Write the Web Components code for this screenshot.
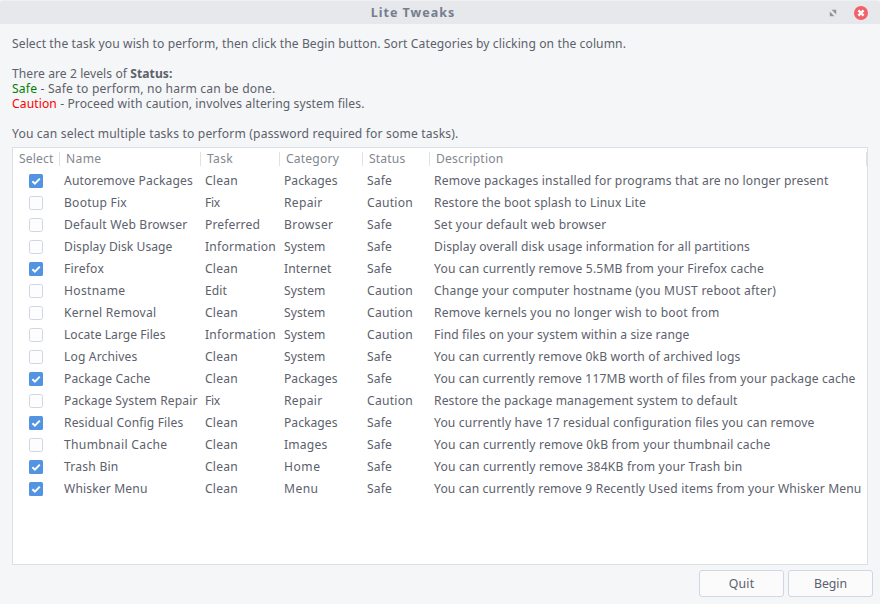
<!DOCTYPE html>
<html lang="en"><head><meta charset="utf-8"><title>Lite Tweaks</title>
<style>
html,body{margin:0;height:100%;background:#f5f6f7}
body{font:12.1px/15px "Noto Sans","Open Sans",sans-serif;color:#5c616c;overflow:hidden}
</style></head><body>
<lite-window></lite-window>
<script>
// A single line of text, tracked out to the width given in its "w" attribute.
customElements.define('fit-text', class extends HTMLElement{
  connectedCallback(){
    if(!this.shadowRoot) this.attachShadow({mode:'open'}).innerHTML='<style>:host{display:inline-block;white-space:pre}</style><slot></slot>';
    const w=+this.getAttribute('w');
    if(!w) return;
    this.style.letterSpacing='0px';
    const n=this.textContent.length;
    this.style.letterSpacing=((w-this.getBoundingClientRect().width)/n)+'px';
  }
});
customElements.define('title-bar', class extends HTMLElement{
  connectedCallback(){
    this.attachShadow({mode:'open'}).innerHTML=`<style>
:host{display:grid;grid-template-columns:1fr auto 1fr;align-items:center;height:24px;box-sizing:border-box;background:#e7e8eb;border-top:1px solid #eff0f2;border-radius:3px 3px 0 0;color:#757d8f;font-weight:bold;font-size:12.5px;padding-right:12px}
.t{grid-column:2;margin-left:-42px;padding-bottom:1px}
.c{display:flex;justify-content:flex-end;align-items:center;gap:17px}
svg{display:block}
</style><span class="t"><slot></slot></span><span class="c">
<svg width="8" height="8" viewBox="0 0 8 8" fill="#8f939b"><path d="M2.6 .8h4.6v4.6zM.8 2.6v4.6h4.6z"/></svg>
<svg width="14" height="14" viewBox="0 0 14 14"><circle cx="7" cy="7" r="7" fill="#f46067"/><path d="M4.4 4.4l5.2 5.2M9.6 4.4l-5.2 5.2" stroke="#fff" stroke-width="2.3"/></svg></span>`;
  }
});
customElements.define('check-box', class extends HTMLElement{
  connectedCallback(){
    const on=this.hasAttribute('checked');
    this.attachShadow({mode:'open'}).innerHTML=`<style>
:host{display:block;width:14px;height:14px}svg{display:block}</style>
<svg width="14" height="14" viewBox="0 0 14 14">${on
?'<rect width="14" height="14" rx="1.6" fill="#5294e2"/><path d="M3.4 7.2l2.5 2.4 4.9-5" fill="none" stroke="#fff" stroke-width="2"/>'
:'<rect x=".5" y=".5" width="13" height="13" rx="1.8" fill="#fdfdfe" stroke="#cfd6e6"/>'}</svg>`;
  }
});
customElements.define('push-button', class extends HTMLElement{
  connectedCallback(){
    this.attachShadow({mode:'open'}).innerHTML=`<style>
:host{display:flex;width:85px;height:27px;box-sizing:border-box;border:1px solid #cfd6e6;border-radius:3px;background:#fbfbfc;align-items:center;justify-content:center;font-size:12.3px}</style><slot></slot>`;
  }
});
const W={'Clean':33,'Fix':15,'Preferred':55,'Information':71,'Edit':22,'Packages':53.5,'Repair':38.5,'Browser':49.5,'System':41.5,'Internet':47.5,'Images':43.5,'Home':36.5,'Menu':34.5,'Safe':25,'Caution':46};
const rows=[
[1,'Autoremove Packages',129,'Clean','Packages','Safe','Remove packages installed for programs that are no longer present',394.5],
[0,'Bootup Fix',63,'Fix','Repair','Caution','Restore the boot splash to Linux Lite',212],
[0,'Default Web Browser',123.5,'Preferred','Browser','Safe','Set your default web browser',172.5],
[0,'Display Disk Usage',108.5,'Information','System','Safe','Display overall disk usage information for all partitions',316],
[1,'Firefox',40,'Clean','Internet','Safe','You can currently remove 5.5MB from your Firefox cache',330],
[0,'Hostname',61.5,'Edit','System','Caution','Change your computer hostname (you MUST reboot after)',342],
[0,'Kernel Removal',92.5,'Clean','System','Caution','Remove kernels you no longer wish to boot from',285.5],
[0,'Locate Large Files',101.5,'Information','System','Caution','Find files on your system within a size range',255.5],
[0,'Log Archives',73.5,'Clean','System','Safe','You can currently remove 0kB worth of archived logs',306.5],
[1,'Package Cache',86.5,'Clean','Packages','Safe','You can currently remove 117MB worth of files from your package cache',421.5],
[0,'Package System Repair',133.5,'Fix','Repair','Caution','Restore the package management system to default',303.5],
[1,'Residual Config Files',119.5,'Clean','Packages','Safe','You currently have 17 residual configuration files you can remove',380.5],
[0,'Thumbnail Cache',103.5,'Clean','Images','Safe','You can currently remove 0kB from your thumbnail cache',336.5],
[1,'Trash Bin',54.5,'Clean','Home','Safe','You can currently remove 384KB from your Trash bin',308.5],
[1,'Whisker Menu',83.5,'Clean','Menu','Safe','You can currently remove 9 Recently Used items from your Whisker Menu',427.5]];
const fit=(t,w)=>`<fit-text w="${w||0}">${t}</fit-text>`;
customElements.define('task-table', class extends HTMLElement{
  connectedCallback(){
    const heads=[['Select',34.5],['Name',35.5],['Task',26],['Category',53],['Status',36.5],['Description',67.5]];
    this.attachShadow({mode:'open'}).innerHTML=`<style>
:host{display:block;background:#fff;border:1px solid #dcdfe3;box-sizing:border-box}
.h,.r{display:grid;grid-template-columns:47px 141px 79px 83px 67px 1fr;height:22px;align-items:center}
.h{color:#83878f}
.h span{height:14px;display:flex;align-items:center;border-right:1px solid #dfe1e5;padding-left:6px}
.h fit-text{margin-top:-2px}
.r span{padding:0 0 1px 4px;white-space:nowrap;height:16px}
check-box{margin-left:16px}
</style><div class="h">${heads.map(h=>`<span>${fit(...h)}</span>`).join('')}</div>`+
rows.map(r=>`<div class="r"><check-box ${r[0]?'checked':''}></check-box><span>${fit(r[1],r[2])}</span>${[3,4,5].map(i=>`<span>${fit(r[i],W[r[i]])}</span>`).join('')}<span>${fit(r[6],r[7])}</span></div>`).join('');
  }
});
customElements.define('lite-window', class extends HTMLElement{
  connectedCallback(){
    this.attachShadow({mode:'open'}).innerHTML=`<style>
:host{display:flex;flex-direction:column;width:880px;height:604px;background:#f5f6f7}
.intro{padding:12px 12px 0;height:111px}
.intro div{height:15px;white-space:pre}
.ok{color:#008000}.bad{color:#f00}
task-table{margin:0 12px;height:418px}
.b{display:flex;justify-content:flex-end;gap:4px;padding:5px 7px 0}
</style>
<title-bar>${fit('Lite Tweaks',84.5)}</title-bar>
<div class="intro">
<div>${fit('Select the task you wish to perform, then click the Begin button. Sort Categories by clicking on the column.',614)}</div>
<div></div>
<div>${fit('There are 2 levels of <b>Status:</b>',160.5)}</div>
<div>${fit('<span class="ok">Safe</span> - Safe to perform, no harm can be done.',263.5)}</div>
<div>${fit('<span class="bad">Caution</span> - Proceed with caution, involves altering system files.',352.5)}</div>
<div></div>
<div>${fit('You can select multiple tasks to perform (password required for some tasks).',446.5)}</div>
</div>
<task-table></task-table>
<div class="b"><push-button>${fit('Quit',25.5)}</push-button><push-button>${fit('Begin',33)}</push-button></div>`;
  }
});
</script></body></html>
